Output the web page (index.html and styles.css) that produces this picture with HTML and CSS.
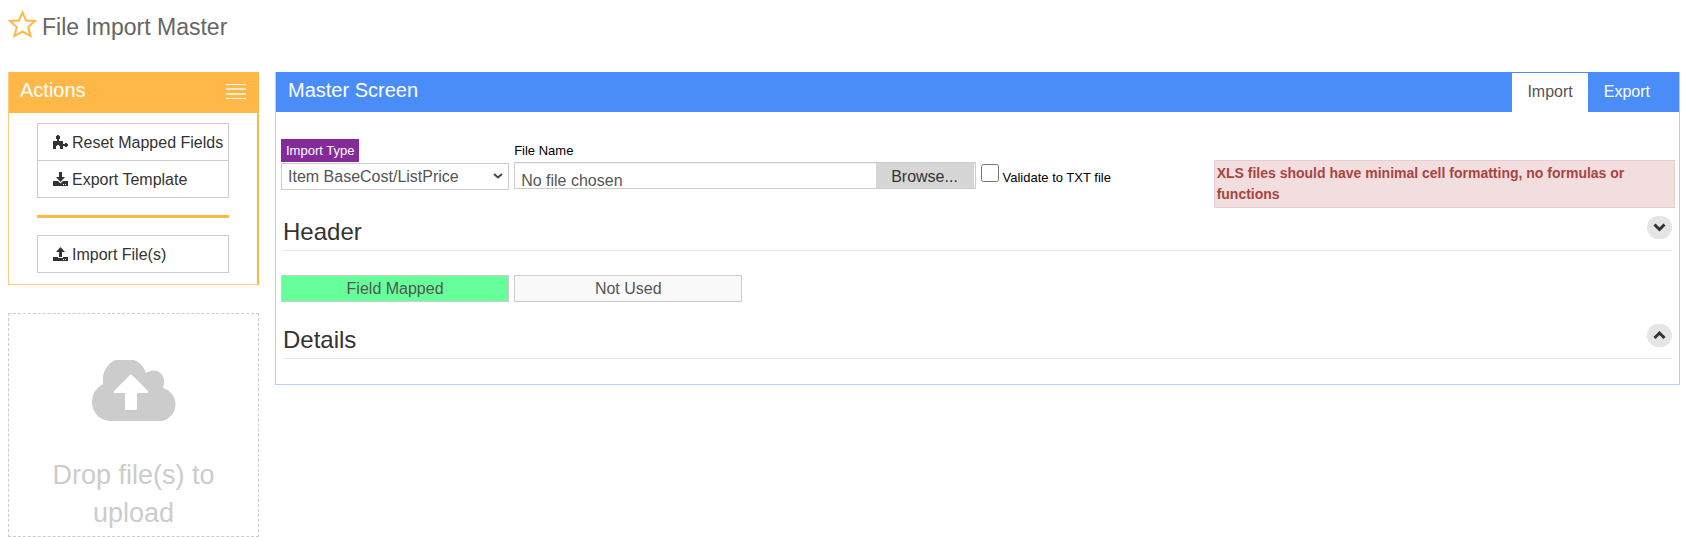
FILE: index.html
```html
<!DOCTYPE html>
<html lang="en">

<head>
    <meta charset="UTF-8">
    <meta name="viewport" content="width=device-width, initial-scale=1.0">
    <title>File Import Master</title>
    <link rel="stylesheet" href="styles.css">
</head>

<body>
    <header class="page-header">
        <svg class="star" viewBox="0 0 29 28" aria-hidden="true">
            <path d="M14.5 2.5L18 10.5L27 11L20.2 17L22.6 26L14.5 21.6L6.4 26L8.8 17L2 11L11 10.5Z" />
        </svg>
        <h1>File Import Master</h1>
    </header>

    <div class="layout">
        <aside class="sidebar">
            <section class="actions">
                <div class="actions-header">
                    <h2>Actions</h2>
                    <svg class="menu-icon" viewBox="0 0 20 15" aria-hidden="true">
                        <path d="M0 0h20v1H0zM0 14h20v1H0z" />
                        <path opacity=".7" d="M0 4h20v2H0zM0 9h20v2H0z" />
                    </svg>
                </div>
                <div class="actions-body">
                    <div class="button-group">
                        <button type="button" class="action-btn">
                            <svg viewBox="0 0 15 15" aria-hidden="true">
                                <path d="M0 6h4V4H3V1h1V0h2v1h1v3H6v2h4v3h2V8h2v1h1v2h-1v1h-2v-1h-2v3H7v-3H6v-1H4v1H3v3H0z" />
                            </svg>
                            Reset Mapped Fields
                        </button>
                        <button type="button" class="action-btn">
                            <svg viewBox="0 0 15 15" aria-hidden="true">
                                <path d="M6 0h3v5h3L7.5 10L3 5h3zM0 9h5l2.500 2.500L10 9h5v5H0zM10 12v1h1v-1zM12 12v1h1v-1z" fill-rule="evenodd" />
                            </svg>
                            Export Template
                        </button>
                    </div>
                    <hr class="divider">
                    <div class="button-group">
                        <button type="button" class="action-btn">
                            <svg viewBox="0 0 15 15" aria-hidden="true">
                                <path d="M7.500 0L12 5H9v5H6V5H3zM0 10h5v1h5v-1h5v4H0zM10 12v1h1v-1zM12 12v1h1v-1z" fill-rule="evenodd" />
                            </svg>
                            Import File(s)
                        </button>
                    </div>
                </div>
            </section>

            <section class="dropzone">
                <svg class="cloud" viewBox="0 0 84 61" aria-hidden="true">
                    <path d="M18 61A18 19 0 0 1 0 42Q0 30 11 24V21A22 21 0 0 1 54 13C62 7 72 12 72 21Q72 25 71 28A17 17 0 0 1 70 61ZM33 49Q33 50 34 50H44Q45 50 45 49V33H55Q57 33 56 31L40 15Q39 14 38 15L22 31Q21 33 23 33H33Z" fill-rule="evenodd" />
                </svg>
                <p>Drop file(s) to upload</p>
            </section>
        </aside>

        <main class="master">
            <div class="master-header">
                <h2>Master Screen</h2>
                <nav class="tabs">
                    <a href="#import" class="tab active">Import</a>
                    <a href="#export" class="tab">Export</a>
                </nav>
            </div>

            <div class="master-body">
                <div class="row">
                    <div class="field">
                        <label class="tag" for="import-type">Import Type</label>
                        <div class="select-wrap">
                            <select id="import-type" class="control">
                                <option>Item BaseCost/ListPrice</option>
                            </select>
                            <svg class="arrow" viewBox="0 0 10 6" aria-hidden="true">
                                <path d="M1 1L5 4.500L9 1" />
                            </svg>
                        </div>
                    </div>
                    <div class="field file-field">
                        <label for="file-name">File Name</label>
                        <div class="file-box">
                            <span class="file-text">No file chosen</span>
                            <span class="browse">Browse...</span>
                            <input type="file" id="file-name">
                        </div>
                    </div>
                    <div class="check-field">
                        <input type="checkbox" id="validate">
                        <label for="validate">Validate to TXT file</label>
                    </div>
                    <div class="alert">XLS files should have minimal cell formatting, no formulas or functions</div>
                </div>

                <div class="section-title">
                    <h3>Header</h3>
                    <button type="button" class="toggle" aria-label="Expand header">
                        <svg viewBox="0 0 13 9" aria-hidden="true">
                            <path d="M1.500 1.500L6.500 6.500L11.500 1.500" />
                        </svg>
                    </button>
                </div>

                <div class="row legend">
                    <div class="legend-item mapped">Field Mapped</div>
                    <div class="legend-item">Not Used</div>
                </div>

                <div class="section-title">
                    <h3>Details</h3>
                    <button type="button" class="toggle" aria-label="Collapse details">
                        <svg viewBox="0 0 13 9" aria-hidden="true">
                            <path d="M1.500 7L6.500 2L11.500 7" />
                        </svg>
                    </button>
                </div>
            </div>
        </main>
    </div>
</body>

</html>
```
FILE: styles.css
```css
* {
    box-sizing: border-box;
}

body {
    margin: 0;
    padding: 8px 9px 0 8px;
    font-family: "Liberation Sans", Arial, sans-serif;
    font-size: 16px;
    color: #333;
    background-color: #fff;
}

h1, h2, h3, p {
    margin: 0;
    font-weight: normal;
}

button, select, input {
    font-family: inherit;
    font-size: inherit;
}

.page-header {
    display: flex;
    align-items: flex-start;
    gap: 5px;
    height: 64px;
}

.page-header h1 {
    font-size: 23px;
    line-height: 38px;
    color: #666;
}

.star {
    width: 29px;
    height: 30px;
    padding-top: 2px;
    fill: none;
    stroke: #ffb848;
    stroke-width: 2;
}

.layout {
    display: flex;
    align-items: flex-start;
    gap: 16px;
}

/* Left column */
.sidebar {
    flex: 0 0 251px;
}

.actions {
    border: 1px solid #ffca77;
    border-right: 2px solid #ffb848;
    border-top: 0;
    margin-bottom: 28px;
}

.actions-header {
    display: flex;
    justify-content: space-between;
    height: 41px;
    padding: 0 11px;
    background-color: #ffb848;
    color: #fff;
}

.actions-header h2,
.master-header h2 {
    font-size: 20px;
    line-height: 37px;
}

.menu-icon {
    width: 20px;
    height: 15px;
    margin-top: 12px;
    fill: #fff;
}

.actions-body {
    padding: 10px 28px 11px;
}

.button-group {
    display: flex;
    flex-direction: column;
}

.action-btn {
    display: flex;
    align-items: center;
    gap: 4px;
    height: 38px;
    padding: 2px 0 0 15px;
    border: 1px solid #ccc;
    background-color: #fff;
    color: #333;
    white-space: nowrap;
    cursor: pointer;
}

.action-btn + .action-btn {
    margin-top: -1px;
}

.action-btn svg {
    flex: none;
    width: 15px;
    height: 15px;
    margin-bottom: 2px;
    fill: #333;
}

.divider {
    height: 3px;
    margin: 17px 0;
    border: 0;
    background-color: #ffb848;
}

.dropzone {
    padding: 46px 30px 0;
    height: 224px;
    border: 1px dashed #ccc;
    text-align: center;
    font-size: 27px;
    line-height: 38px;
    color: #ccc;
}

.cloud {
    display: block;
    width: 84px;
    height: 61px;
    margin: 0 auto 35px;
    fill: #ccc;
}

/* Main panel */
.master {
    flex: 1;
    min-width: 0;
    border: 1px solid #b4cef8;
    border-top: 0;
}

.master-header {
    display: flex;
    justify-content: space-between;
    height: 40px;
    padding: 0 13px 0 12px;
    background-color: #4b8df8;
    color: #fff;
}

.tabs {
    display: flex;
    padding-top: 1px;
}

.tab {
    padding: 0 16px;
    line-height: 37px;
    color: #fff;
    text-decoration: none;
}

.tab.active {
    padding: 0 15px;
    background-color: #fff;
    color: #555;
}

.master-body {
    padding: 27px 4px 25px 5px;
}

.row {
    display: grid;
    grid-template-columns: repeat(6, 1fr);
    column-gap: 5px;
}

.field {
    display: flex;
    flex-direction: column;
    align-items: flex-start;
}

.field label,
.check-field label {
    font-size: 13px;
    color: #000;
}

.field label {
    line-height: 23px;
}

.field .tag {
    padding: 0 5px;
    margin-bottom: 1px;
    background-color: #852b99;
    color: #fff;
}

.file-field {
    grid-column: span 2;
}

.select-wrap,
.file-box {
    position: relative;
    width: 100%;
}

.control {
    appearance: none;
    display: block;
    width: 100%;
    height: 27px;
    padding: 0 6px;
    border: 1px solid #ccc;
    border-radius: 0;
    background-color: #fff;
    color: #555;
}

.arrow {
    position: absolute;
    right: 6px;
    top: 10px;
    width: 10px;
    height: 6px;
    fill: none;
    stroke: #444;
    stroke-width: 2;
    pointer-events: none;
}

.file-box {
    display: flex;
    height: 27px;
    padding-right: 1px;
    border: 1px solid #ccc;
    box-shadow: inset 0 1px 1px rgba(0, 0, 0, 0.08);
    color: #555;
}

.file-text {
    flex: 1;
    padding: 4px 6px 0;
    line-height: 27px;
}

.browse {
    width: 98px;
    background-color: #d6d6d6;
    color: #333;
    line-height: 28px;
    text-align: center;
}

.file-box input {
    position: absolute;
    inset: 0;
    width: 100%;
    opacity: 0;
    cursor: pointer;
}

.check-field {
    display: flex;
    align-items: flex-start;
    gap: 4px;
    padding-top: 25px;
}

.check-field input {
    width: 18px;
    height: 18px;
    margin: 0;
}

.check-field label {
    line-height: 27px;
    white-space: nowrap;
}

.alert {
    grid-column: 5 / span 2;
    margin-top: 21px;
    padding: 2px;
    border: 1px solid #ebccd1;
    background-color: #f2dede;
    color: #a94442;
    font-size: 14px;
    font-weight: bold;
    line-height: 21px;
}

.section-title {
    display: flex;
    justify-content: space-between;
    height: 43px;
    margin: 0 3px 0 2px;
    padding-top: 8px;
    border-bottom: 1px solid #e5e5e5;
}

.section-title h3 {
    font-size: 24px;
    line-height: 32px;
}

.toggle {
    display: flex;
    align-items: center;
    justify-content: center;
    width: 25px;
    height: 23px;
    padding: 0;
    border: 0;
    border-radius: 12px;
    background-color: #e5e5e5;
    cursor: pointer;
}

.toggle svg {
    width: 13px;
    height: 9px;
    fill: none;
    stroke: #333;
    stroke-width: 3;
}

.legend {
    margin: 24px 0 14px;
}

.legend-item {
    height: 27px;
    border: 1px solid #ccc;
    background-color: #f9f9f9;
    color: #555;
    line-height: 25px;
    text-align: center;
}

.legend-item.mapped {
    background-color: #6f9;
}
```
